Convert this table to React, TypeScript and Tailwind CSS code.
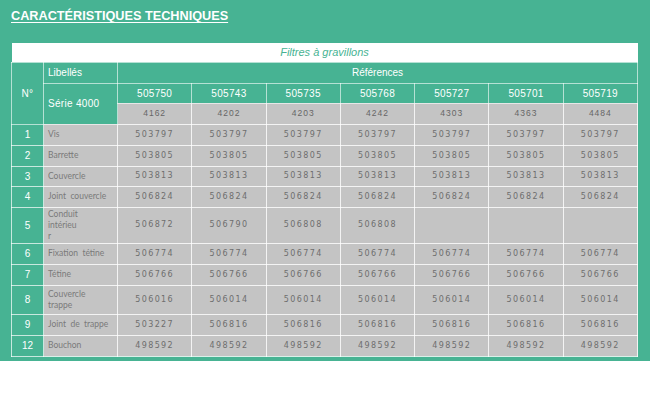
import React from 'react';

const refs = ['505750', '505743', '505735', '505768', '505727', '505701', '505719'];
const series = ['4162', '4202', '4203', '4242', '4303', '4363', '4484'];

type Row = { n: string; label: React.ReactNode; values: string[]; h: string };

const rows: Row[] = [
  { n: '1', label: 'Vis', values: Array(7).fill('503797'), h: 'h-[21px]' },
  { n: '2', label: 'Barrette', values: Array(7).fill('503805'), h: 'h-[21px]' },
  { n: '3', label: 'Couvercle', values: Array(7).fill('503813'), h: 'h-[20px]' },
  { n: '4', label: 'Joint  couvercle', values: Array(7).fill('506824'), h: 'h-[21px]' },
  {
    n: '5',
    label: (
      <>
        Conduit
        <br />
        intérieu
        <br />r
      </>
    ),
    values: ['506872', '506790', '506808', '506808', '', '', ''],
    h: 'h-[36px]',
  },
  { n: '6', label: 'Fixation  tétine', values: Array(7).fill('506774'), h: 'h-[21px]' },
  { n: '7', label: 'Tétine', values: Array(7).fill('506766'), h: 'h-[21px]' },
  {
    n: '8',
    label: (
      <>
        Couvercle
        <br />
        trappe
      </>
    ),
    values: ['506016', '506014', '506014', '506014', '506014', '506014', '506014'],
    h: 'h-[29px]',
  },
  { n: '9', label: 'Joint  de  trappe', values: ['503227', '506816', '506816', '506816', '506816', '506816', '506816'], h: 'h-[21px]' },
  { n: '12', label: 'Bouchon', values: Array(7).fill('498592'), h: 'h-[21px]' },
];

export default function App() {
  return (
    <div className="w-[650px] h-[394px] bg-white">
      <div className="bg-[#47b393] px-[11px] pt-[9px] pb-[4px]">
        {/* Title */}
        <h1 className="font-['Liberation_Sans',Arial,sans-serif] font-bold text-[12.7px] leading-[15px] text-white underline underline-offset-[2px]">
          CARACTÉRISTIQUES TECHNIQUES
        </h1>

        {/* Table */}
        <table className="mt-[19px] w-[627px] table-fixed border-collapse font-['Liberation_Sans',Arial,sans-serif]">
          <colgroup>
            <col className="w-[32px]" />
            <col className="w-[74px]" />
            {refs.map((r) => (
              <col key={r} />
            ))}
          </colgroup>
          <thead>
            <tr className="h-[19px] bg-white">
              <th colSpan={9} className="p-0 text-center text-[11px] font-normal italic text-[#47b393]">
                Filtres à gravillons
              </th>
            </tr>
            <tr className="h-[21px] bg-[#47b393] text-white">
              <th rowSpan={3} className="border border-white/60 p-0 text-[10px] font-normal text-center tracking-[0.5px]">
                N°
              </th>
              <th className="border border-white/60 px-[4px] text-left text-[10px] font-normal">Libellés</th>
              <th colSpan={7} className="border border-white/60 p-0 text-center text-[10px] font-normal">
                Références
              </th>
            </tr>
            <tr className="h-[20px] bg-[#47b393] text-white">
              <th rowSpan={2} className="border border-white/60 px-[4px] text-left text-[10px] font-normal tracking-[0.3px]">
                Série 4000
              </th>
              {refs.map((r) => (
                <th key={r} className="border border-white/60 p-0 text-center text-[10px] font-normal tracking-[0.3px]">
                  {r}
                </th>
              ))}
            </tr>
            <tr className="h-[21px] bg-[#c4c4c4]">
              {series.map((s) => (
                <td key={s} className="border border-white/80 p-0 text-center text-[8.5px] tracking-[1px] text-[#666666]">
                  {s}
                </td>
              ))}
            </tr>
          </thead>
          <tbody>
            {rows.map((row) => (
              <tr key={row.n} className={row.h}>
                <td className="border border-white/70 bg-[#47b393] p-0 text-center text-[10px] text-white">{row.n}</td>
                <td className="border border-white/80 bg-[#c4c4c4] px-[4px] py-0 text-left font-['Lato',sans-serif] text-[8.5px] leading-[11px] text-[#7a7a7a] whitespace-pre">
                  {row.label}
                </td>
                {row.values.map((v, i) => (
                  <td
                    key={i}
                    className="border border-white/80 bg-[#c4c4c4] p-0 text-center font-['DejaVu_Sans',Verdana,sans-serif] text-[8px] tracking-[1.4px] text-[#6e6e6e]"
                  >
                    {v}
                  </td>
                ))}
              </tr>
            ))}
          </tbody>
        </table>
      </div>
    </div>
  );
}
